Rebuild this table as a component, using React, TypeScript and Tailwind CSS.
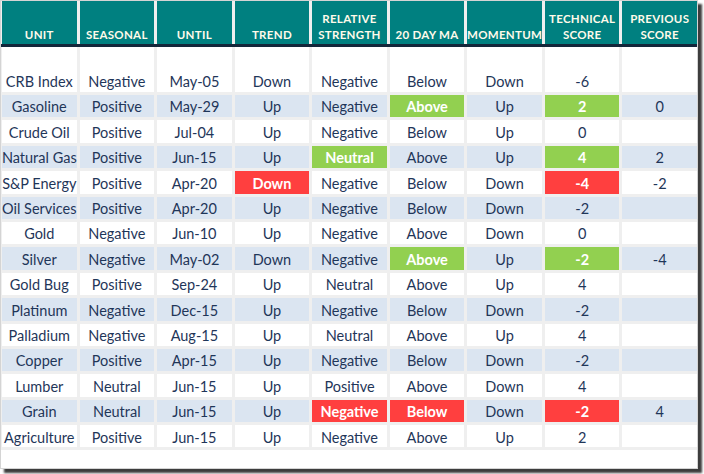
type Tone = "g" | "r" | undefined;

interface Row {
  unit: string;
  seasonal: string;
  until: string;
  trend: string;
  rs: string;
  ma: string;
  momentum: string;
  score: string;
  prev: string;
  hi?: Partial<Record<"trend" | "rs" | "ma" | "score", Tone>>;
}

const headers: string[][] = [
  ["UNIT"],
  ["SEASONAL"],
  ["UNTIL"],
  ["TREND"],
  ["RELATIVE", "STRENGTH"],
  ["20 DAY MA"],
  ["MOMENTUM"],
  ["TECHNICAL", "SCORE"],
  ["PREVIOUS", "SCORE"],
];

const rows: Row[] = [
  { unit: "CRB Index", seasonal: "Negative", until: "May-05", trend: "Down", rs: "Negative", ma: "Below", momentum: "Down", score: "-6", prev: "" },
  { unit: "Gasoline", seasonal: "Positive", until: "May-29", trend: "Up", rs: "Negative", ma: "Above", momentum: "Up", score: "2", prev: "0", hi: { ma: "g", score: "g" } },
  { unit: "Crude Oil", seasonal: "Positive", until: "Jul-04", trend: "Up", rs: "Negative", ma: "Below", momentum: "Up", score: "0", prev: "" },
  { unit: "Natural Gas", seasonal: "Positive", until: "Jun-15", trend: "Up", rs: "Neutral", ma: "Above", momentum: "Up", score: "4", prev: "2", hi: { rs: "g", score: "g" } },
  { unit: "S&P Energy", seasonal: "Positive", until: "Apr-20", trend: "Down", rs: "Negative", ma: "Below", momentum: "Down", score: "-4", prev: "-2", hi: { trend: "r", score: "r" } },
  { unit: "Oil Services", seasonal: "Positive", until: "Apr-20", trend: "Up", rs: "Negative", ma: "Below", momentum: "Down", score: "-2", prev: "" },
  { unit: "Gold", seasonal: "Negative", until: "Jun-10", trend: "Up", rs: "Negative", ma: "Above", momentum: "Down", score: "0", prev: "" },
  { unit: "Silver", seasonal: "Negative", until: "May-02", trend: "Down", rs: "Negative", ma: "Above", momentum: "Up", score: "-2", prev: "-4", hi: { ma: "g", score: "g" } },
  { unit: "Gold Bug", seasonal: "Positive", until: "Sep-24", trend: "Up", rs: "Neutral", ma: "Above", momentum: "Up", score: "4", prev: "" },
  { unit: "Platinum", seasonal: "Negative", until: "Dec-15", trend: "Up", rs: "Negative", ma: "Below", momentum: "Down", score: "-2", prev: "" },
  { unit: "Palladium", seasonal: "Negative", until: "Aug-15", trend: "Up", rs: "Neutral", ma: "Above", momentum: "Up", score: "4", prev: "" },
  { unit: "Copper", seasonal: "Positive", until: "Apr-15", trend: "Up", rs: "Negative", ma: "Below", momentum: "Down", score: "-2", prev: "" },
  { unit: "Lumber", seasonal: "Neutral", until: "Jun-15", trend: "Up", rs: "Positive", ma: "Above", momentum: "Down", score: "4", prev: "" },
  { unit: "Grain", seasonal: "Neutral", until: "Jun-15", trend: "Up", rs: "Negative", ma: "Below", momentum: "Down", score: "-2", prev: "4", hi: { rs: "r", ma: "r", score: "r" } },
  { unit: "Agriculture", seasonal: "Positive", until: "Jun-15", trend: "Up", rs: "Negative", ma: "Above", momentum: "Up", score: "2", prev: "" },
];

function Cell({ text, tone, shaded, first }: { text: string; tone?: Tone; shaded: boolean; first: boolean }) {
  const bg =
    tone === "g" ? "bg-[#92d050] text-white font-bold" : tone === "r" ? "bg-[#ff3f3f] text-white font-bold" : shaded ? "bg-[#dbe5f1] text-[#1f3659]" : "bg-white text-[#1f3659]";
  return (
    <div
      className={`flex justify-center whitespace-nowrap overflow-hidden text-[14.5px] leading-none ${first ? "h-[45px] items-end pb-[3px]" : "h-[22.4px] items-center pt-[3px]"} ${bg}`}
    >
      {text}
    </div>
  );
}

export default function App() {
  return (
    <div className="w-[704px] h-[474px] bg-white" style={{ fontFamily: "Lato, 'Open Sans', sans-serif" }}>
      <div className="w-[698px] h-[469px] bg-white border border-[#d4d4d4] shadow-[4px_4px_2px_rgba(40,40,40,0.9)]">
        <div className="grid grid-cols-9 gap-x-[3px] bg-[#efefef] pl-[1px] h-[43px]">
          {headers.map((h, i) => (
            <div
              key={i}
              className="bg-[#008080] text-[#fffaea] font-bold text-[11.5px] leading-[16px] tracking-[0.3px] flex flex-col items-center justify-end pb-[1px]"
            >
              {h.map((line) => (
                <span key={line}>{line}</span>
              ))}
            </div>
          ))}
        </div>
        <div className="h-[3px] bg-[#13263a]" />
        <div className="grid grid-cols-9 gap-x-[3px] gap-y-[3px] bg-[#efefef] pl-[1px] pb-[3px]">
          {rows.map((r, i) => {
            const shaded = i % 2 === 1;
            const first = i === 0;
            const hi = r.hi || {};
            return [
              <Cell key={`${i}a`} text={r.unit} shaded={shaded} first={first} />,
              <Cell key={`${i}b`} text={r.seasonal} shaded={shaded} first={first} />,
              <Cell key={`${i}c`} text={r.until} shaded={shaded} first={first} />,
              <Cell key={`${i}d`} text={r.trend} tone={hi.trend} shaded={shaded} first={first} />,
              <Cell key={`${i}e`} text={r.rs} tone={hi.rs} shaded={shaded} first={first} />,
              <Cell key={`${i}f`} text={r.ma} tone={hi.ma} shaded={shaded} first={first} />,
              <Cell key={`${i}g`} text={r.momentum} shaded={shaded} first={first} />,
              <Cell key={`${i}h`} text={r.score} tone={hi.score} shaded={shaded} first={first} />,
              <Cell key={`${i}i`} text={r.prev} shaded={shaded} first={first} />,
            ];
          })}
        </div>
      </div>
    </div>
  );
}
